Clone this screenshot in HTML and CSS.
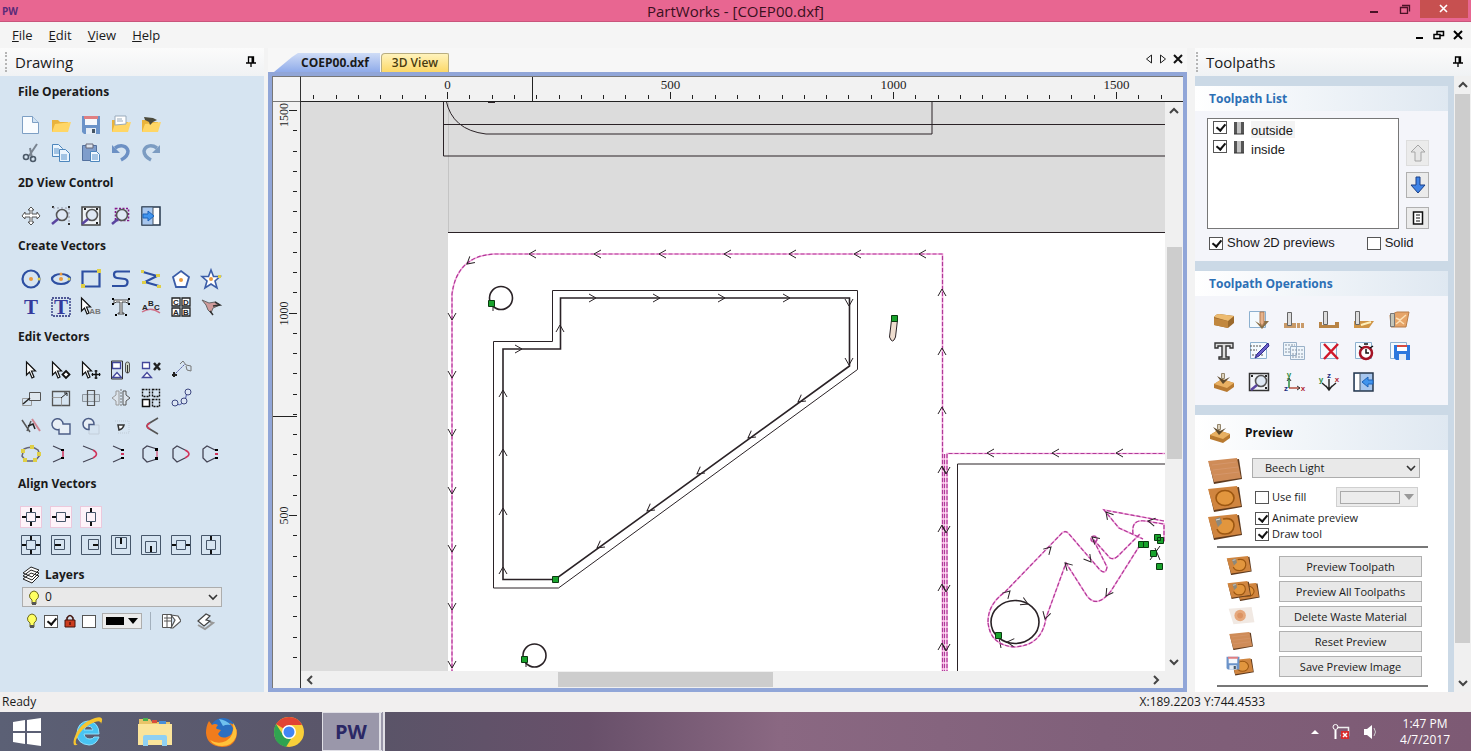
FILE: index.html
```html
<!DOCTYPE html>
<html lang="en">
<head>
  <meta charset="UTF-8" />
  <meta name="viewport" content="width=device-width, initial-scale=1.0"/>
  <title>PartWorks - [COEP00.dxf]</title>
  <link rel="stylesheet" href="styles.css">
</head>
<body>
  <!-- shared icon shapes -->
  <svg class="sprite" aria-hidden="true">
    <symbol id="folder" viewBox="0 0 20 20"><path d="M1 5h6l2 2h8v10H1z" fill="#e9b33c"/><path d="M4 9l16-2-3 10H1z" fill="#ffd666"/></symbol>
    <symbol id="page" viewBox="0 0 20 20"><path d="M1.500 1.500h16v16h-16z" fill="#f4fafe" stroke="#8cb0cf"/></symbol>
    <symbol id="cursor" viewBox="0 0 20 20"><path d="M2.500 2v13l3-3 2.500 6 2-1-2.500-6h4z" fill="#fff" stroke="#111" stroke-width="1.200"/></symbol>
    <symbol id="lens" viewBox="0 0 20 20"><circle cx="11" cy="9" r="5.500" fill="#dfe8f4" stroke="#555" stroke-width="1.600"/><path d="M7 13l-6 5" stroke="#5a45a0" stroke-width="2.500"/></symbol>
    <symbol id="floppy" viewBox="0 0 20 20"><path d="M1 1h18v18H3l-2-2z" fill="#6b93c9"/><path d="M4 1h12v9H4z" fill="#f5f8fc"/><path d="M3 1h14v3H3z" fill="#e07f82"/><path d="M5 13h10v6H5z" fill="#e4ecf5"/><path d="M11 14h3v4h-3z" fill="#456"/></symbol>
    <symbol id="plank" viewBox="0 0 22 18"><path d="M1 5q2-3 5-3l15 2v7l-6 5L1 13z" fill="#9c6a2c"/><path d="M1 5q2-3 5-3l15 2-6 5z" fill="#edbb70"/><path d="M1 6l14 3v7L1 13z" fill="#c1873e"/></symbol>
    <symbol id="board" viewBox="0 0 36 26"><path d="M2 5l30-4 3 20-28 5z" fill="#5e3a1e"/><path d="M1 3l29-3 4 20-27 4z" fill="#cf8c58"/><path d="M5 7l24-3M6 12l25-3M7 17l25-3" stroke="#d5966a"/></symbol>
    <symbol id="board-ring" viewBox="0 0 36 26"><path d="M2 5l30-4 3 20-28 5z" fill="#5e3a1e"/><path d="M1 3l29-3 4 20-27 4z" fill="#d0853f"/><ellipse cx="18" cy="12" rx="9" ry="7.500" fill="#e2963e" stroke="#9c5711" stroke-width="1.600"/></symbol>
    <symbol id="board-tool" viewBox="0 0 36 26"><path d="M2 5l30-4 3 20-28 5z" fill="#5e3a1e"/><path d="M1 3l29-3 4 20-27 4z" fill="#d0853f"/><path d="M16 5q11-2 11 7-1 8-9 8-6 0-8-5" fill="#e2963e" stroke="#9c5711" stroke-width="1.600"/><path d="M8 5l5-2 2 6-4 4z" fill="#8d897c"/><path d="M9 6l4-1" stroke="#ddd"/></symbol>
    <symbol id="carve" viewBox="0 0 22 20"><path d="M1 12l8-5 12 4v4l-7 5L1 16z" fill="#b87a31"/><path d="M1 12l8-5 12 4-7 5z" fill="#e8b062"/><path d="M4 4l6 8 7-7-6 3z" fill="#5f4a2c"/><path d="M8.500 1.500h3v5h-3z" fill="#ddd2bd" stroke="#94866c"/></symbol>
    <symbol id="bulb" viewBox="0 0 12 16"><path d="M4 10Q1 8 1.500 5 3 1 6 1t4.500 4Q11 8 8 10v4H4z" fill="#ffff62" stroke="#6e6b20"/><path d="M4 12h4v3H4z" fill="#555"/></symbol>
    <symbol id="pin" viewBox="0 0 10 12"><path d="M2.500 1h5v6h-5zM0 7h10M5 7v4" fill="none" stroke="#000" stroke-width="1.300"/><path d="M5.500 1h2v6h-2z"/></symbol>
    <symbol id="up" viewBox="0 0 10 8"><path d="M1 6l4-4 4 4" fill="none" stroke="#444" stroke-width="2"/></symbol>
  </svg>

  <div class="window">
    <header class="titlebar">
      <span class="app-mark">PW</span>
      <h1>PartWorks - [COEP00.dxf]</h1>
      <div class="window-buttons">
        <button aria-label="Minimize"><svg width="10" height="10"><path d="M1 8h8" stroke="#4a1226" stroke-width="2"/></svg></button>
        <button aria-label="Restore"><svg width="12" height="10"><path d="M1.500 3.500h7v6h-7zM3 1.500h7.500v6" fill="none" stroke="#4a1226" stroke-width="1.300"/></svg></button>
        <button class="close" aria-label="Close"><svg width="10" height="10"><path d="M1 1l7 7M8 1l-7 7" stroke="#fff" stroke-width="1.600"/></svg></button>
      </div>
    </header>

    <nav class="menubar">
      <button><u>F</u>ile</button>
      <button><u>E</u>dit</button>
      <button><u>V</u>iew</button>
      <button><u>H</u>elp</button>
      <div class="doc-buttons">
        <button aria-label="Minimize document"><svg width="10" height="10"><path d="M1 8h7" stroke="#000" stroke-width="2"/></svg></button>
        <button aria-label="Restore document"><svg width="12" height="10"><path d="M1 4.500h6v4H1zM4 4V1.500h6.500v4H7" fill="none" stroke="#000" stroke-width="1.500"/></svg></button>
        <button aria-label="Close document"><svg width="10" height="10"><path d="M1 1l8 8M9 1l-8 8" stroke="#000" stroke-width="2"/></svg></button>
      </div>
    </nav>

    <main class="workspace">
      <aside class="drawing">
        <div class="panel-title"><h2>Drawing</h2><button aria-label="Pin drawing panel"><svg width="10" height="12"><use href="#pin"/></svg></button></div>
        <div class="drawing-body">
          <h3>File Operations</h3>
          <div class="tools">
            <button aria-label="New"><svg viewBox="0 0 20 20"><path d="M1.500 1.500h10l6 6v11h-16z" fill="#f9fcff" stroke="#7d9fc4"/><path d="M11.500 1.500v6h6" fill="#cfe2f4" stroke="#7d9fc4"/></svg></button>
            <button aria-label="Open"><svg viewBox="0 0 20 20"><use href="#folder"/></svg></button>
            <button aria-label="Save"><svg viewBox="0 0 20 20"><use href="#floppy"/></svg></button>
            <button aria-label="Import vectors"><svg viewBox="0 0 20 20"><use href="#folder"/><path d="M4 1h11v8L4 10z" fill="#fff" stroke="#9ab"/><path d="M6 4h5M6 6h6" stroke="#9ab"/></svg></button>
            <button aria-label="Import bitmap"><svg viewBox="0 0 20 20"><use href="#folder"/><path d="M3 2l9 1 4 2-4 2-3 3-1-3-4-2z" fill="#4c4a3c"/></svg></button>
            <i></i><i></i>
            <button aria-label="Cut"><svg viewBox="0 0 20 20"><path d="M16 1L8 13M9 5l2 10" stroke="#7a8490" stroke-width="2"/><circle cx="5" cy="14" r="2.500" fill="none" stroke="#4b5968" stroke-width="1.600"/><circle cx="12" cy="16" r="2.500" fill="none" stroke="#4b5968" stroke-width="1.600"/></svg></button>
            <button aria-label="Copy"><svg viewBox="0 0 20 20"><path d="M1.500 1.500h6l4 4v8h-10z" fill="#eaf4fd" stroke="#4d86bd"/><path d="M8.500 6.500h6l4 4v8h-10z" fill="#eaf4fd" stroke="#4d86bd"/><path d="M3 6h5M3 8h5M3 10h5M10 12h6M10 14h6M10 16h6" stroke="#5b93cb"/></svg></button>
            <button aria-label="Paste"><svg viewBox="0 0 20 20"><path d="M1.500 2.500h14v15h-14z" fill="#7f9dcb" stroke="#54719e"/><path d="M5 1h7v4H5z" fill="#dde4ee" stroke="#667"/><path d="M9.500 8.500h6l3 3v7h-9z" fill="#f2f8fe" stroke="#4d86bd"/><path d="M11 12h6M11 14h6M11 16h6" stroke="#5b93cb"/></svg></button>
            <button aria-label="Undo"><svg viewBox="0 0 20 20"><path d="M4 5c6-4 12-2 13 3 0 4-3 7-7 9" fill="none" stroke="#6c90c4" stroke-width="3.500"/><path d="M1 2v8h8z" fill="#6c90c4"/></svg></button>
            <button aria-label="Redo"><svg viewBox="0 0 20 20"><path d="M16 5c-6-4-12-2-13 3 0 4 3 7 7 9" fill="none" stroke="#7c9cc2" stroke-width="3.500"/><path d="M19 2v8h-8z" fill="#7c9cc2"/></svg></button>
          </div>

          <h3>2D View Control</h3>
          <div class="tools">
            <button aria-label="Pan"><svg viewBox="0 0 20 20"><path d="M10 1l3 3h-2v4h5V6l3 4-3 3v-2h-5v5h2l-3 3-3-3h2v-5H4v2l-3-3 3-4v2h5V4H7z" fill="#fff" stroke="#555"/></svg></button>
            <button aria-label="Zoom"><svg viewBox="0 0 20 20"><use href="#lens"/><path d="M1 1h2M17 1h2M17 18h2" stroke="#333" stroke-width="2"/><path d="M2 2h16v16" fill="none" stroke="#99a" stroke-dasharray="2 2"/></svg></button>
            <button aria-label="Zoom extents"><svg viewBox="0 0 20 20"><path d="M1 1h18v18H1z" fill="#eef2f6" stroke="#444" stroke-width="1.500"/><path d="M3 3h2M15 3h2M15 17h2" stroke="#222" stroke-width="2"/><use href="#lens"/></svg></button>
            <button aria-label="Zoom selected"><svg viewBox="0 0 20 20"><path d="M4.500 2.500h13v12h-13z" fill="none" stroke="#86188c" stroke-width="1.600" stroke-dasharray="2 1.500"/><use href="#lens"/></svg></button>
            <button aria-label="Toggle side panels"><svg viewBox="0 0 20 20"><path d="M1 1h18v18H1z" fill="#fff" stroke="#27384d" stroke-width="1.500"/><path d="M1 1h11v18H1z" fill="#a7c6ee" stroke="#456"/><path d="M2 8h5V5l6 5-6 5v-3H2z" fill="#4094ee" stroke="#1c62b8"/></svg></button>
          </div>

          <h3>Create Vectors</h3>
          <div class="tools">
            <button aria-label="Circle"><svg viewBox="0 0 20 20"><circle cx="10" cy="10" r="8.500" class="blue"/><circle cx="10" cy="10" r="2" fill="#eb9a3c"/><circle cx="18" cy="10" r="1.500" fill="#e4d34b"/></svg></button>
            <button aria-label="Ellipse"><svg viewBox="0 0 20 20"><ellipse cx="10" cy="10" rx="9" ry="5" class="blue"/><circle cx="10" cy="10" r="2" fill="#eb9a3c"/><circle cx="10" cy="5" r="1.500" fill="#eb9a3c"/><circle cx="18" cy="10" r="1.500" fill="#e4d34b"/></svg></button>
            <button aria-label="Rectangle"><svg viewBox="0 0 20 20"><path d="M1.500 2.500h17v15h-17z" class="blue"/><path d="M0 15h4v4H0zM16 0h4v4h-4z" fill="#dfcf47"/></svg></button>
            <button aria-label="Polyline"><svg viewBox="0 0 20 20"><path d="M19 2.500H6c-4 0-4 6 0 6.500l8 1c4 1 3 7-1 7H1" class="blue"/></svg></button>
            <button aria-label="Curve"><svg viewBox="0 0 20 20"><path d="M2 3l14 4-12 6 14 4" class="blue"/><path d="M0 1h3v3H0zM15 5h4v3h-4zM1 12h4v3H1zM16 16h4v3h-4z" fill="#dfcf47"/></svg></button>
            <button aria-label="Polygon"><svg viewBox="0 0 20 20"><path d="M10 2l8 6-3 10H5L2 8z" fill="#fff" stroke="#3b5da8" stroke-width="1.800"/><circle cx="10" cy="11" r="2" fill="#eb9a3c"/></svg></button>
            <button aria-label="Star"><svg viewBox="0 0 20 20"><path d="M10 1l2.500 6.500H19l-5 4.500 2 7-6-4-6 4 2-7-5-4.500h6.500z" fill="#fff" stroke="#3b5da8" stroke-width="1.600"/><circle cx="10" cy="10" r="2" fill="#eb9a3c"/><path d="M17 6h3v3h-3z" fill="#dfcf47"/></svg></button>
            <button aria-label="Text"><svg viewBox="0 0 20 20"><text x="10" y="17" class="letter">T</text></svg></button>
            <button aria-label="Auto text layout"><svg viewBox="0 0 20 20"><path d="M1 1h18v18H1z" fill="none" stroke="#232a78" stroke-width="1.300" stroke-dasharray="2 1"/><text x="10" y="17" class="letter">T</text></svg></button>
            <button aria-label="Edit text"><svg viewBox="0 0 20 20"><use href="#cursor" x="-2" y="-1"/><text x="14" y="17" class="tiny grey">AB</text></svg></button>
            <button aria-label="Convert text to curves"><svg viewBox="0 0 20 20"><path d="M3 3h14v3h-1l-1-1h-4v11h2v1H7v-1h2V5H5L4 6H3z" fill="#fff" stroke="#444"/><path d="M1 1h2v2H1zM17 1h2v2h-2zM4 17h2v2H4zM14 17h2v2h-2zM1 6h2v2H1zM17 6h2v2h-2z"/></svg></button>
            <button aria-label="Text on curve"><svg viewBox="0 0 20 20"><path d="M1 15q9-6 18 1" fill="none" stroke="#cf6f86" stroke-width="1.500"/><text x="4" y="13" class="tiny">A</text><text x="10" y="9" class="tiny">B</text><text x="16" y="13" class="tiny">C</text></svg></button>
            <button aria-label="Nest parts"><svg viewBox="0 0 20 20"><path d="M1 1h8v8H1zM11 1h8v8h-8zM1 11h8v8H1zM11 11h8v8h-8z" fill="#fff" stroke="#222" stroke-width="1.300"/><text x="5" y="8" class="tiny">C</text><text x="15" y="8" class="tiny">D</text><text x="5" y="18" class="tiny">A</text><text x="15" y="18" class="tiny">B</text></svg></button>
            <button aria-label="Trace bitmap"><svg viewBox="0 0 20 20"><path d="M1 3l7 3 6-1 5 3-7 3-2 5-3-3-2-5z" fill="#cf9a9a" stroke="#666"/><path d="M9 14l3 4M14 5l5 3-7 1" stroke="#333" fill="none" stroke-width="1.500"/></svg></button>
          </div>

          <h3>Edit Vectors</h3>
          <div class="tools">
            <button aria-label="Select"><svg viewBox="0 0 20 20"><use href="#cursor" x="3"/></svg></button>
            <button aria-label="Node edit"><svg viewBox="0 0 20 20"><use href="#cursor" x="-1"/><path d="M15 11l3.500 3.500-3.500 3.500-3.500-3.500z" fill="#fff" stroke="#111" stroke-width="1.800"/></svg></button>
            <button aria-label="Transform"><svg viewBox="0 0 20 20"><use href="#cursor" x="-1"/><path d="M15 10v9M10.500 14.500h9" stroke="#111" stroke-width="1.500"/><path d="M13.500 11h3M13.500 18h3M11.500 13v3M18.500 13v3" stroke="#111"/></svg></button>
            <button aria-label="Group"><svg viewBox="0 0 20 20"><path d="M1.500 2.500h8v6h-8zM1.500 17.500l4.500-5 4.500 5z" fill="#fff" stroke="#43479b" stroke-width="1.300"/><path d="M.5 1v18h11V1z" fill="none" stroke="#333"/><rect x="14.500" y="2" width="4" height="11" rx="2" fill="#cdd6c6" stroke="#555"/><path d="M16.500 5v8" stroke="#333"/></svg></button>
            <button aria-label="Ungroup"><svg viewBox="0 0 20 20"><path d="M1.500 2.500h7v6h-7zM1.500 17.500l4.500-5 4.500 5z" fill="#fff" stroke="#43479b" stroke-width="1.300"/><path d="M13 3l6 7M19 3l-6 7" stroke="#222" stroke-width="2.500"/></svg></button>
            <button aria-label="Measure"><svg viewBox="0 0 20 20"><path d="M3 15L14 4" stroke="#4a4f9c" stroke-dasharray="2 1"/><path d="M9 4l3-3 3 4 5 1v5l-4-1-1-4" fill="none" stroke="#777"/><path d="M1 15h5M3 12v5" stroke="#222" stroke-width="2"/></svg></button>
            <i></i>
            <button aria-label="Move"><svg viewBox="0 0 20 20"><path d="M1.500 10.500h9v7h-9z" fill="none" stroke="#999"/><path d="M8.500 4.500h11v8h-11z" fill="#dfe7ee" stroke="#555"/><path d="M2 16l7-6" stroke="#222" stroke-width="1.500"/></svg></button>
            <button aria-label="Set size"><svg viewBox="0 0 20 20"><path d="M1.500 3.500h17v14h-17z" fill="none" stroke="#555" stroke-width="1.300"/><path d="M1.500 9.500h9v8" fill="none" stroke="#999"/><path d="M10 10l6-5M16 5h-3M16 5v3" stroke="#222"/></svg></button>
            <button aria-label="Rotate"><svg viewBox="0 0 20 20"><path d="M1.500 6.500h17v7h-17z" fill="#cfdbe5" stroke="#8c959e"/><path d="M6.500 2.500h7v15h-7z" fill="none" stroke="#555" stroke-width="1.200"/></svg></button>
            <button aria-label="Mirror"><svg viewBox="0 0 20 20"><path d="M8 3H5v4L1 10l4 3v4h3z" fill="#dde5ed" stroke="#999"/><path d="M12 3h3v4l4 3-4 3v4h-3z" fill="#dde5ed" stroke="#555"/><path d="M10 1v18" stroke="#777" stroke-dasharray="2 1"/></svg></button>
            <button aria-label="Array copy"><svg viewBox="0 0 20 20"><path d="M1.500 1.500h7v7h-7zM11.500 1.500h7v7h-7zM11.500 11.500h7v7h-7z" fill="none" stroke="#111" stroke-width="1.400" stroke-dasharray="2 1"/><path d="M1.500 11.500h7v7h-7z" fill="#fff" stroke="#111" stroke-width="1.500"/></svg></button>
            <button aria-label="Copy along"><svg viewBox="0 0 20 20"><path d="M4 16q10 4 12-12" fill="none" stroke="#4a57a8"/><circle cx="4" cy="15" r="3" class="dot"/><circle cx="13" cy="13" r="3" class="dot"/><circle cx="17" cy="4" r="3" class="dot"/></svg></button>
            <i></i>
            <button aria-label="Trim"><svg viewBox="0 0 20 20"><path d="M1 4l8 12M6 15l4-10" stroke="#555" stroke-width="1.500"/><path d="M11 3l8 12" stroke="#d08592" stroke-width="2"/><path d="M7 10l5-2 2 5" stroke="#222" fill="none" stroke-width="1.500"/></svg></button>
            <button aria-label="Weld"><svg viewBox="0 0 20 20"><path d="M8 13.500A5.500 5.500 0 1 1 12 8h7v10H8z" fill="#e8eff6" stroke="#4c5d86" stroke-width="1.400"/></svg></button>
            <button aria-label="Subtract"><svg viewBox="0 0 20 20"><path d="M8 13v5h10V9h-5" fill="none" stroke="#c3ceda"/><path d="M13 8.500H8v5A5.500 5.500 0 1 1 13 8.500z" fill="#e8eff6" stroke="#4c5d86" stroke-width="1.500"/></svg></button>
            <button aria-label="Intersect"><svg viewBox="0 0 20 20"><path d="M7 9h6q-1 4-5 5z" fill="#fff" stroke="#333" stroke-width="1.500"/><path d="M4 5h14v12H6" fill="none" stroke="#c1ccd7" stroke-dasharray="1 1"/></svg></button>
            <button aria-label="Fillet"><svg viewBox="0 0 20 20"><path d="M17 2L7 8q-2 2 0 4l10 6" fill="none" stroke="#555" stroke-width="1.600"/><path d="M9 7q-6 3 0 6" fill="none" stroke="#d13a5a" stroke-width="1.500"/></svg></button>
            <i></i><i></i>
            <button aria-label="Join vectors"><svg viewBox="0 0 20 20"><path d="M3 5q8-4 14 1l2 5-5 6H5l-4-5z" fill="none" stroke="#667" stroke-width="1.500"/><path d="M0 5h4v4H0zM9 1h4v4H9zM16 8h4v4h-4zM2 14h4v4H2zM12 14h4v4h-4z" fill="#dfcf47"/></svg></button>
            <button aria-label="Close with line"><svg viewBox="0 0 20 20"><path d="M2 2l9 4M2 18l9-4" stroke="#445" stroke-width="1.300"/><path d="M12 6v8" stroke="#d0335a" stroke-width="1.500"/><path d="M10 5h3v2h-3zM10 13h3v2h-3z"/></svg></button>
            <button aria-label="Close with curve"><svg viewBox="0 0 20 20"><path d="M2 2l10 4M2 18l10-4" stroke="#445" stroke-width="1.300"/><path d="M12 6q7 4 0 8" fill="none" stroke="#d0335a" stroke-width="1.500"/></svg></button>
            <button aria-label="Close by moving"><svg viewBox="0 0 20 20"><path d="M2 2l9 4M2 18l9-4" stroke="#445" stroke-width="1.300"/><path d="M10 5h3v2h-3zM10 13h3v2h-3z"/><path d="M10 9h3v2h-3z" fill="#d0335a"/></svg></button>
            <button aria-label="Join with line"><svg viewBox="0 0 20 20"><path d="M16 5L6 2 2 5v9l4 4 10-3" fill="none" stroke="#445" stroke-width="1.300"/><path d="M16 5v10" stroke="#d0335a"/><path d="M14 4h3v3h-3zM14 13h3v3h-3z"/></svg></button>
            <button aria-label="Join with curve"><svg viewBox="0 0 20 20"><path d="M14 6L6 2 2 5v9l4 4 8-4" fill="none" stroke="#445" stroke-width="1.300"/><path d="M14 6q8 4 0 8" fill="none" stroke="#d0335a" stroke-width="1.500"/></svg></button>
            <button aria-label="Join by moving"><svg viewBox="0 0 20 20"><path d="M14 6L6 2 2 5v9l4 4 8-4" fill="none" stroke="#445" stroke-width="1.300"/><path d="M14 5h3v2h-3zM14 13h3v2h-3z"/><path d="M14 9h3v2h-3z" fill="#d0335a"/></svg></button>
          </div>

          <h3>Align Vectors</h3>
          <div class="tools">
            <button aria-label="Center in job"><svg viewBox="0 0 20 20" class="plate"><path d="M5.500 5.500h9v9h-9z" class="thin"/><path d="M1 10h4M15 10h4M10 1v4M10 15v4" class="tick"/></svg></button>
            <button aria-label="Center across job"><svg viewBox="0 0 20 20" class="plate"><path d="M5.500 5.500h9v9h-9z" class="thin"/><path d="M1 10h4M15 10h4" class="tick"/></svg></button>
            <button aria-label="Center along job"><svg viewBox="0 0 20 20" class="plate"><path d="M5.500 5.500h9v9h-9z" class="thin"/><path d="M10 1v4M10 15v4" class="tick"/></svg></button>
            <i></i><i></i><i></i><i></i>
            <button aria-label="Align centers"><svg viewBox="0 0 20 20"><path d="M.5.5h19v19H.5zM5.500 5.500h9v9h-9z" class="thin"/><path d="M1 10h4M15 10h4M10 1v4M10 15v4" class="tick"/></svg></button>
            <button aria-label="Align left"><svg viewBox="0 0 20 20"><path d="M.5.5h19v19H.5zM3.500 4.500h10v10h-10z" class="thin"/><path d="M4 10h6" class="tick"/></svg></button>
            <button aria-label="Align right"><svg viewBox="0 0 20 20"><path d="M.5.5h19v19H.5zM7.500 4.500h10v10h-10z" class="thin"/><path d="M12 10h5" class="tick"/></svg></button>
            <button aria-label="Align top"><svg viewBox="0 0 20 20"><path d="M.5.5h19v19H.5zM4.500 2.500h11v11h-11z" class="thin"/><path d="M10 3v6" class="tick"/></svg></button>
            <button aria-label="Align bottom"><svg viewBox="0 0 20 20"><path d="M.5.5h19v19H.5zM4.500 6.500h11v11h-11z" class="thin"/><path d="M10 11v6" class="tick"/></svg></button>
            <button aria-label="Align horizontal centers"><svg viewBox="0 0 20 20"><path d="M.5.5h19v19H.5zM5.500 5.500h9v9h-9z" class="thin"/><path d="M1 10h4M15 10h4" class="tick"/></svg></button>
            <button aria-label="Align vertical centers"><svg viewBox="0 0 20 20"><path d="M.5.5h19v19H.5zM5.500 5.500h9v9h-9z" class="thin"/><path d="M10 1v4M10 15v4" class="tick"/></svg></button>
          </div>

          <h3 class="layers-title"><svg width="18" height="18" viewBox="0 0 18 18"><path d="M1 13l8-6 8 3-7 7zM1 10l8-6 8 3-7 7zM1 7l8-6 8 3-7 7z" fill="#fff" stroke="#222"/></svg>Layers</h3>
          <div class="layer-select">
            <svg width="12" height="16"><use href="#bulb"/></svg>
            <select aria-label="Layer"><option>0</option></select>
            <svg class="chevron" width="10" height="8" viewBox="0 0 10 8"><path d="M1 2l4 4 4-4" fill="none" stroke="#333" stroke-width="1.600"/></svg>
          </div>
          <div class="layer-row">
            <svg width="12" height="16"><use href="#bulb"/></svg>
            <input type="checkbox" aria-label="Visible" checked>
            <svg width="12" height="14" viewBox="0 0 12 14"><path d="M3 6V4q3-5 6 0v2" fill="none" stroke="#44150f" stroke-width="1.600"/><path d="M1 6h10v7H1z" fill="#cc3d1f" stroke="#44150f"/><path d="M6 8v3" stroke="#200"/></svg>
            <input type="checkbox" aria-label="Locked">
            <button class="swatch" aria-label="Layer colour"><span></span><svg width="10" height="6"><path d="M0 0h10L5 6z"/></svg></button>
            <span class="divider"></span>
            <button aria-label="Move to layer"><svg viewBox="0 0 20 20"><path d="M1.500 3.500h9v13h-9zM3 7h7M3 10h7M6 4v12" fill="#fff" stroke="#555"/><path d="M10 4l7 1 3 5-8 7h-2l4-8z" fill="#fff" stroke="#555" stroke-width="1.200"/></svg></button>
            <button aria-label="Layer manager"><svg viewBox="0 0 20 20"><path d="M3 14l7 4 8-6-3-1" fill="none" stroke="#999" stroke-width="2"/><path d="M3 10l8-7 4 2-4 4 4 1-6 5z" fill="#fff" stroke="#444" stroke-width="1.200"/></svg></button>
          </div>
        </div>
      </aside>

      <section class="document">
        <div class="tabs">
          <button class="tab active">COEP00.dxf</button>
          <button class="tab view3d">3D View</button>
          <div class="tab-nav">
            <button aria-label="Previous tab"><svg width="8" height="10"><path d="M6.500 1v8L1.500 5z" fill="none" stroke="#222"/></svg></button>
            <button aria-label="Next tab"><svg width="8" height="10"><path d="M1.500 1v8l5-4z" fill="none" stroke="#222"/></svg></button>
            <button aria-label="Close tab"><svg width="10" height="10"><path d="M1 1l8 8M9 1l-8 8" stroke="#111" stroke-width="2"/></svg></button>
          </div>
        </div>
        <div class="viewport">
          <div class="corner"></div>
          <svg class="ruler-x" id="rulerX"></svg>
          <svg class="ruler-y" id="rulerY"></svg>
          <div class="canvas">
            <svg>
              <g transform="translate(-301 -102)">
                <path d="M448 232h2000v1000H448z" fill="#fff"/>
                <path d="M448.500 100v133" stroke="#c4c4c4"/>
                <g class="ink">
                  <path d="M448 232.500h2000M443.500 100v56h2000M443 124.500h2000M446 100q6 30 40 34h446v-34M957.500 800v-336h1500"/>
                  <path d="M488 102h7" stroke-width="2"/>
                  <path d="M552.500 290.500h305v79L558.500 588h-65V341.500h59z"/>
                  <path d="M560.500 298h289v68L555 579.500h-52V349h57.500z" class="heavy"/>
                  <circle cx="501" cy="298" r="11.500" class="heavy"/>
                  <circle cx="534.500" cy="655.500" r="11.500" class="heavy"/>
                  <ellipse cx="1015" cy="622" rx="24" ry="21.500" class="heavy"/>
                  <path d="M493 305v6M526 661v6M999 638l2 10M1155 548l5 12M1150 560l10-14"/>
                  <path d="M891.500 320l-2 17q3 8 6 0l2-17z" fill="#eeddcf"/>
                </g>
                <!-- toolpath previews: pale track with the dashed cut on top -->
                <g id="cuts">
                  <path d="M942.500 800V254H494q-37 2-42 40v506"/>
                  <path d="M947 800V453.500h1500M944.500 454v400"/>
                  <path d="M988 622q0-18 17-30l57-59q4-3 7 1l31 36q6 5 7-3l-14-28 17 19q4 2 8-2l22-22"/>
                  <path d="M1140 545l-29 46q-14 18-24 5l-21-33-20 55q-4 28-32 29-24-2-26-25"/>
                  <path d="M1164 521l-60-11 15 18 24 11M1133 534q-2-15 12-13l19 3v18"/>
                  <circle cx="1094" cy="539" r="3"/>
                </g>
                <use href="#cuts" class="track-line"/>
                <use href="#cuts" class="cut"/>
                <g class="ink" id="arrows"></g>
                <g class="node">
                  <path d="M488.500 300.500h6v6h-6zM521.500 656.500h6v6h-6zM552.500 576.500h6v6h-6zM891.500 315.500h6v6h-6zM995.500 632.500h6v6h-6z"/>
                  <path d="M1138.500 541.500h5v6h-5zM1143.500 541.500h5v6h-5zM1154.500 534.500h6v6h-6zM1157.500 537.500h6v6h-6zM1150.500 550.500h6v6h-6zM1156.500 563.500h6v6h-6z"/>
                </g>
              </g>
            </svg>
          </div>
          <div class="scroll-y">
            <svg width="10" height="8"><use href="#up"/></svg>
            <div class="track"><div class="thumb"></div></div>
            <svg class="down" width="10" height="8"><use href="#up"/></svg>
          </div>
          <div class="scroll-x">
            <svg class="left" width="10" height="8"><use href="#up"/></svg>
            <div class="track"><div class="thumb"></div></div>
            <svg class="right" width="10" height="8"><use href="#up"/></svg>
          </div>
        </div>
      </section>

      <aside class="toolpaths">
        <div class="panel-title"><h2>Toolpaths</h2><button aria-label="Pin toolpaths panel"><svg width="10" height="12"><use href="#pin"/></svg></button></div>
        <div class="toolpaths-body">
          <div class="cards">
            <section class="card">
              <h3>Toolpath List</h3>
              <div class="list-row">
                <div class="list">
                  <label class="current"><input type="checkbox" checked><svg width="12" height="16" viewBox="0 0 12 16"><path d="M1 1h3v12H1zM8 1h3v12H8z" fill="#555"/><path d="M4 1h4v12H4z" fill="#c4c4c4"/><path d="M1 13h10" stroke="#333"/></svg><span>outside</span></label>
                  <label><input type="checkbox" checked><svg width="12" height="16" viewBox="0 0 12 16"><path d="M1 1h3v12H1zM8 1h3v12H8z" fill="#555"/><path d="M4 1h4v12H4z" fill="#c4c4c4"/><path d="M1 13h10" stroke="#333"/></svg><span>inside</span></label>
                </div>
                <div class="list-buttons">
                  <button disabled aria-label="Move up"><svg width="18" height="20"><path d="M9 2l7 7h-4v9H6V9H2z" fill="#e6e6e6" stroke="#a5a5a5"/></svg></button>
                  <button aria-label="Move down"><svg width="18" height="20"><path d="M9 18l7-8h-5V2H7v8H2z" fill="#3f83e6" stroke="#1b3f86"/></svg></button>
                  <button class="note" aria-label="Properties"><svg width="12" height="14"><path d="M1.500 1h9v12h-9z" fill="#fff" stroke="#111" stroke-width="1.500"/><path d="M4 4h4M4 7h4M4 10h4" stroke="#111"/></svg></button>
                </div>
              </div>
              <div class="preview-row">
                <label><input type="checkbox" checked>Show 2D previews</label>
                <label><input type="checkbox">Solid</label>
              </div>
            </section>

            <section class="card">
              <h3>Toolpath Operations</h3>
              <div class="operations">
                <button aria-label="Material setup"><svg viewBox="0 0 22 20"><use href="#plank" y="1"/></svg></button>
                <button aria-label="Toolpath settings"><svg viewBox="0 0 22 20"><use href="#page" x="-1"/><path d="M12 2h4v9h5l-7 8-7-8 5 3z" fill="#8a7048"/><path d="M12 2h4v11l-2 3-2-3z" fill="#e8b28a" stroke="#b07d55"/></svg></button>
                <button aria-label="Profile toolpath"><svg viewBox="0 0 22 20"><path d="M1 13h12v5H1zM14 13h3v5h-3zM18 13h3v5h-3z" fill="#c99a68"/><path d="M4.500 2.500h4v13h-4z" fill="#ddd" stroke="#666"/></svg></button>
                <button aria-label="Pocket toolpath"><svg viewBox="0 0 22 20"><path d="M1 12h3v3h13v-3h4v6H1z" fill="#b88445"/><path d="M5.500 1.500h4v13h-4z" fill="#ddd" stroke="#666"/></svg></button>
                <button aria-label="Drilling toolpath"><svg viewBox="0 0 22 20"><path d="M1 11h20l-5 7H1z" fill="#cf9445"/><path d="M8 15l10-3" stroke="#fff0ba" stroke-width="2"/><path d="M2.500 1.500h4v13h-4z" fill="#ddd" stroke="#666"/></svg></button>
                <button aria-label="VCarve toolpath"><svg viewBox="0 0 22 20"><path d="M2 5l7-3h12l-3 15H3z" fill="#e6a468" stroke="#b77d49"/><path d="M8 8l4 2 6-5M8 14l4-3 4 3" stroke="#fce0b5" stroke-width="1.500" fill="none"/><path d="M2.500 3.500h4v13h-4z" fill="#c5c5b8" stroke="#777"/></svg></button>
                <button aria-label="Quick engrave"><svg viewBox="0 0 22 20"><path d="M2 2h18v5h-3V5h-4v11h3v2H6v-2h3V5H5v2H2z" fill="#ddd" stroke="#333" stroke-width="1.400"/></svg></button>
                <button aria-label="Edit toolpath"><svg viewBox="0 0 22 20"><use href="#page"/><path d="M2 5h11M2 9h7M4 14h12" stroke="#555" stroke-dasharray="2 1"/><path d="M20 2L9 13l-2 4 4-2L21 5z" fill="#6a5fc8" stroke="#302a8c"/></svg></button>
                <button aria-label="Duplicate toolpath"><svg viewBox="0 0 22 20"><path d="M.5 1.500h13v13H.5zM7.500 5.500h14v13h-14z" fill="#eef5fb" stroke="#9ab1c8"/><path d="M2 4h10M2 8h5M9 9h11M9 13h11M2 11h5M9 16h11" stroke="#8795a6" stroke-dasharray="2 1"/></svg></button>
                <button aria-label="Delete toolpath"><svg viewBox="0 0 22 20"><use href="#page"/><path d="M6 3l14 15M20 3L6 18" stroke="#d1182a" stroke-width="2.500"/></svg></button>
                <button aria-label="Estimate time"><svg viewBox="0 0 22 20"><use href="#page"/><circle cx="13" cy="12" r="6" fill="#fff" stroke="#a41326" stroke-width="2.500"/><path d="M13 8v4h3M11 3h4M6 5l3 2M20 5l-3 2" stroke="#111" stroke-width="1.500" fill="none"/></svg></button>
                <button aria-label="Save toolpath"><svg viewBox="0 0 22 20"><use href="#page"/><path d="M6 4h16v15H8l-2-2z" fill="#2d78dd"/><path d="M9 4h10v6H9z" fill="#fff"/><path d="M9 4h10v2H9z" fill="#d84b3f"/><path d="M11 13h7v6h-7z" fill="#e4ecf5"/></svg></button>
                <button aria-label="Preview toolpath"><svg viewBox="0 0 22 20"><use href="#carve"/></svg></button>
                <button aria-label="Fit view"><svg viewBox="0 0 22 20"><path d="M1.500 1.500h19v17h-19z" fill="#f2f4f8" stroke="#333" stroke-width="1.500"/><path d="M3 4h2M17 4h2M17 16h2" stroke="#222" stroke-width="2"/><use href="#lens" x="1"/></svg></button>
                <button aria-label="View down Z"><svg viewBox="0 0 22 20"><path d="M6 7v9" stroke="#2b8a3e" stroke-width="1.500"/><path d="M6 16h11" stroke="#a32" stroke-width="1.300"/><path d="M4 9l2-3 2 3M14 14l3 2-3 2" fill="none" stroke="#333"/><text x="6" y="5" class="tiny green">y</text><text x="3" y="19" class="tiny navy">z</text><text x="20" y="19" class="tiny red">x</text></svg></button>
                <button aria-label="Isometric view"><svg viewBox="0 0 22 20"><path d="M11 7v10M11 17l-7-6M11 17l7-6M8 14l3 4 3-4" fill="none" stroke="#222" stroke-width="1.400"/><text x="11" y="6" class="tiny navy">z</text><text x="3" y="10" class="tiny green">y</text><text x="19" y="10" class="tiny red">x</text></svg></button>
                <button aria-label="Toggle panel"><svg viewBox="0 0 22 20"><path d="M1 1h19v18H1z" fill="#a7c6ee" stroke="#27384d" stroke-width="1.500"/><path d="M2 2h5v16H2z" fill="#fff"/><path d="M7 1v18" stroke="#456"/><path d="M20 8h-5V5l-6 5 6 5v-3h5z" fill="#4094ee" stroke="#1c62b8"/></svg></button>
              </div>
            </section>

            <section class="card preview">
              <h3><svg width="22" height="20"><use href="#carve"/></svg>Preview</h3>
              <div class="material">
                <div class="boards">
                  <svg width="36" height="26"><use href="#board"/></svg>
                  <svg width="36" height="26"><use href="#board-ring"/></svg>
                  <svg width="36" height="26"><use href="#board-tool"/></svg>
                </div>
                <div class="options">
                  <div class="select-wrap">
                    <select aria-label="Material"><option>Beech Light</option></select>
                    <svg class="chevron" width="10" height="8" viewBox="0 0 10 8"><path d="M1 2l4 4 4-4" fill="none" stroke="#333" stroke-width="1.600"/></svg>
                  </div>
                  <div class="fill-row">
                    <label><input type="checkbox">Use fill</label>
                    <button class="fill" disabled aria-label="Fill colour"><span></span><svg width="10" height="6"><path d="M0 0h10L5 6z" fill="#999"/></svg></button>
                  </div>
                  <label><input type="checkbox" checked>Animate preview</label>
                  <label><input type="checkbox" checked>Draw tool</label>
                </div>
              </div>
              <hr>
              <div class="actions">
                <svg viewBox="0 0 36 22"><use href="#board-tool" x="0" y="0" width="28" height="20"/></svg><button>Preview Toolpath</button>
                <svg viewBox="0 0 36 22"><use href="#board-ring" x="9" y="2" width="28" height="19"/><use href="#board-tool" x="1" y="0" width="26" height="19"/></svg><button>Preview All Toolpaths</button>
                <svg viewBox="0 0 36 22"><path d="M3 3l24-2 3 16-22 2z" fill="#f1e9e3"/><circle cx="15" cy="10" r="6" fill="#e6a87c"/><circle cx="15" cy="10" r="3" fill="#dc9362"/></svg><button>Delete Waste Material</button>
                <svg viewBox="0 0 36 22"><use href="#board" x="2" y="1" width="28" height="19"/></svg><button>Reset Preview</button>
                <svg viewBox="0 0 36 22"><use href="#board-ring" x="5" y="2" width="25" height="19"/><use href="#floppy" x="0" y="0" width="15" height="15"/></svg><button>Save Preview Image</button>
              </div>
              <hr>
            </section>
          </div>
          <div class="side-scroll">
            <svg width="10" height="8"><use href="#up"/></svg>
            <div class="track"><div class="thumb"></div></div>
            <svg class="down" width="10" height="8"><use href="#up"/></svg>
          </div>
        </div>
      </aside>
    </main>

    <footer class="status"><span>Ready</span><span class="coords">X:189.2203 Y:744.4533</span></footer>

    <div class="taskbar">
      <button aria-label="Start"><svg width="30" height="28" viewBox="0 0 30 28"><path d="M1 4l12-2v11H1zM15 2l14-2v13H15zM1 15h12v11L1 24zM15 15h14v13l-14-2z" fill="#fff"/></svg></button>
      <button aria-label="Internet Explorer"><svg width="34" height="32" viewBox="0 0 34 32"><path d="M28 18H13q1 5 6 5 3 0 4-2h5q-3 8-10 8Q6 28 6 17 7 6 17 5q11 1 11 13zM13 14h9q-1-4-5-4-3 0-4 4z" fill="#48c3f2" stroke="#8fe0fc" fill-rule="evenodd"/><path d="M7 28Q1 32 3 23 8 7 24 2q10-3 6 6 0-4-6-2Q10 11 5 24q-1 5 2 4z" fill="#f7c52e"/></svg></button>
      <button aria-label="File Explorer"><svg width="36" height="30" viewBox="0 0 36 30"><path d="M2 2h11l2 3h18v23H2z" fill="#e9c468"/><path d="M6 1h5v3H6z" fill="#4caf50"/><path d="M15 3h5v3h-5z" fill="#d94d3b"/><path d="M22 4h7v3h-7z" fill="#4a90d9"/><path d="M1 7h34v21H1z" fill="#fbe49b"/><path d="M6 29V20q0-2 2-2h20q2 0 2 2v9h-5v-6H11v6z" fill="#8fd0f3"/></svg></button>
      <button aria-label="Firefox"><svg width="34" height="32" viewBox="0 0 34 32"><circle cx="18" cy="15" r="13" fill="#2a6fc0"/><path d="M14 3q7 1 12 6-5-1-8 1z" fill="#6fc1ee"/><path d="M4 5l3 4q3-2 6 0-3 3-1 4l4 1-3 4q3 5 9 3 6-2 6-9-2-4-4-5 8 1 8 11-2 13-15 13Q2 30 1 17q0-7 3-12z" fill="#f07c1c"/><path d="M28 7q5 6 3 14-4 9-14 9-8 0-12-6 8 5 16 1 9-5 7-18z" fill="#ffc23a"/></svg></button>
      <button aria-label="Chrome"><svg width="32" height="32" viewBox="0 0 32 32"><circle cx="16" cy="16" r="15" fill="#f9cf3a"/><path d="M16 16L3 8Q8 1 16 1q9 0 13 8H16z" fill="#e14434"/><path d="M3 8l9 14 6 1-5 8Q1 28 1 16q0-5 2-8z" fill="#30a351"/><circle cx="16" cy="16" r="7" fill="#fff"/><circle cx="16" cy="16" r="5.500" fill="#4285f4"/></svg></button>
      <button class="running">PW</button>
      <div class="tray">
        <svg width="10" height="6"><path d="M1 5h8L5 1z" fill="#fff"/></svg>
        <svg width="18" height="18" viewBox="0 0 18 18"><path d="M5.500 4.500h11v8h-8" fill="none" stroke="#eee" stroke-width="1.500"/><circle cx="3.500" cy="4" r="2.500" fill="none" stroke="#fff"/><path d="M3.500 7v9" stroke="#fff" stroke-width="2"/><path d="M9 8h8v8H9z" fill="#d92c2c"/><path d="M11 10l4 4M15 10l-4 4" stroke="#fff" stroke-width="1.500"/></svg>
        <svg width="16" height="16" viewBox="0 0 16 16"><path d="M2 5h3l5-4v14l-5-4H2z" fill="#fff"/><path d="M12 4q3 4 0 8" fill="none" stroke="#ccc"/></svg>
        <div class="clock"><div>1:47 PM</div><div>4/7/2017</div></div>
      </div>
    </div>
  </div>

  <script>
    const svgNS = "http://www.w3.org/2000/svg";

    function add(parent, tag, attrs, text) {
      const el = document.createElementNS(svgNS, tag);
      for (const name in attrs) el.setAttribute(name, attrs[name]);
      if (text) el.textContent = text;
      parent.appendChild(el);
    }

    // rulers: one tick every 50 units, a label every 500
    function drawRulers() {
      const rulerX = document.getElementById("rulerX");
      const rulerY = document.getElementById("rulerY");

      for (let u = -300; u <= 1600; u += 50) {
        const x = Math.round(146 + u * 0.446) + 0.5;
        const major = u % 500 === 0;
        add(rulerX, "path", { d: `M${x} ${major ? 15 : 18}V22` });
        if (major) add(rulerX, "text", { x: x, y: 12 }, String(u));
      }
      add(rulerX, "path", { d: "M231.5 0V24" });

      for (let u = 1500; u >= 150; u -= 50) {
        const y = Math.round(8 + (1500 - u) * 0.405) + 0.5;
        const major = u % 500 === 0;
        add(rulerY, "path", { d: `M${major ? 16 : 20} ${y}H24` });
        // the top label is kept inside the ruler
        if (major) add(rulerY, "text", { transform: `translate(15 ${Math.max(y, 13)}) rotate(-90)` }, String(u));
      }
      add(rulerY, "path", { d: "M0 314.5H24" });
    }

    // [x, y, heading in degrees]
    const arrows = [
      [596, 298, 0], [660, 298, 0], [725, 298, 0], [790, 298, 0], [522, 349, 0],
      [560, 325, -90], [849, 306, 90], [849, 365, 90],
      [798, 402, 144], [748, 438, 144], [697, 474, 144], [647, 511, 144], [597, 548, 144],
      [467, 264, 140], [987, 453, 180], [1052, 453, 180], [1116, 453, 180],
      [1051, 547, -45], [1010, 591, -45], [1091, 562, 52], [1065, 563, -135],
      [1106, 596, 125], [1045, 619, 105], [1106, 512, -130], [1028, 604, 25],
      [1007, 642, 185], [1092, 537, -140], [1148, 521, 190]
    ];
    for (let x = 529; x < 940; x += 65) arrows.push([x, 254, 180]);
    for (let y = 320; y < 680; y += 58) arrows.push([452, y, 90]);
    for (let y = 390; y < 580; y += 59) arrows.push([503, y, -90]);
    for (let y = 289; y < 660; y += 59) arrows.push([942, y, -90]);
    for (let y = 474; y < 660; y += 59) arrows.push([946, y, 90]);

    const arrowLayer = document.getElementById("arrows");
    arrows.forEach(([x, y, angle]) => {
      add(arrowLayer, "path", { d: "M-7 -4L0 0L-7 4", transform: `translate(${x} ${y}) rotate(${angle})` });
    });

    drawRulers();
  </script>
</body>
</html>
```
FILE: styles.css
```css
* {
  box-sizing: border-box;
}

body {
  margin: 0;
  font-family: "Open Sans", "Noto Sans", sans-serif;
  font-size: 12px;
  line-height: 16px;
  color: #1a1a1a;
  background: #f0f0f0;
}

h1, h2, h3 {
  margin: 0;
}

button {
  padding: 0;
  border: none;
  background: none;
  font: inherit;
  color: inherit;
}

svg {
  display: block;
  flex: none;
}

.sprite {
  position: absolute;
  width: 0;
  height: 0;
}

.window {
  display: flex;
  flex-direction: column;
  height: 100vh;
}

.titlebar {
  display: flex;
  align-items: center;
  height: 22px;
  flex: none;
  background: #e86691;
  border-bottom: 1px solid #c9557c;
}

.titlebar h1 {
  flex: 1;
  text-align: center;
  font-size: 15px;
  font-weight: normal;
  color: #3a1020;
}

.app-mark {
  width: 112px;
  padding-left: 2px;
  font-size: 10px;
  font-weight: bold;
  color: #5a2a78;
}

.window-buttons {
  display: flex;
  width: 112px;
  height: 18px;
  align-self: flex-start;
}

.window-buttons button {
  display: flex;
  flex: 1;
  align-items: center;
  justify-content: center;
}

.window-buttons .close {
  flex: none;
  width: 48px;
  margin-right: 3px;
  background: #c75050;
}

.menubar {
  display: flex;
  align-items: center;
  gap: 16px;
  height: 26px;
  flex: none;
  padding: 0 8px 0 12px;
  background: #f5f5f5;
  font-size: 13px;
}

.doc-buttons {
  display: flex;
  gap: 8px;
  margin-left: auto;
}

.workspace {
  display: flex;
  flex: 1;
  min-height: 0;
}

.panel-title {
  display: flex;
  align-items: center;
  justify-content: space-between;
  height: 28px;
  flex: none;
  padding: 0 8px;
  background: linear-gradient(#fbfbfb, #f0f2f4);
}

.panel-title::before {
  content: "";
  height: 20px;
  margin-left: -3px;
  margin-right: 8px;
  border-left: 2px dotted #b5b5b5;
}

.panel-title h2 {
  flex: 1;
  font-size: 15px;
  font-weight: normal;
}

/* left panel */
.drawing {
  width: 264px;
  flex: none;
  display: flex;
  flex-direction: column;
}

.drawing-body {
  flex: 1;
  min-height: 0;
  padding: 8px 16px;
  background: #d6e4f1;
}

.drawing h3 {
  padding-left: 2px;
  font-size: 12px;
}

.tools {
  display: grid;
  grid-template-columns: repeat(7, 30px);
  grid-auto-rows: 28px;
  margin: 11px 0 8px;
}

.tools button, .operations button {
  display: flex;
  align-items: center;
  justify-content: center;
}

.tools svg {
  width: 20px;
  height: 20px;
  overflow: visible;
}

.blue {
  fill: none;
  stroke: #2d4fa2;
  stroke-width: 2.2px;
}

.dot {
  fill: #dce6f4;
  stroke: #3d4780;
}

.thin {
  fill: none;
  stroke: #46566a;
}

.tick {
  stroke: #111;
  stroke-width: 2px;
}

.tools .plate {
  background: #fdf3f9;
  outline: 1px solid #ecc9dc;
}

.letter {
  font: bold 21px "Liberation Serif", serif;
  text-anchor: middle;
  fill: #343a9c;
}

.tiny {
  font: bold 8px "Liberation Sans", sans-serif;
  text-anchor: middle;
  fill: #222;
}

.grey {
  fill: #777;
}

.green {
  fill: #2b8a3e;
}

.navy {
  fill: #1d2f80;
}

.red {
  fill: #b02535;
}

.drawing .layers-title {
  display: flex;
  align-items: center;
  gap: 5px;
  height: 16px;
  padding-left: 6px;
}

select {
  appearance: none;
  width: 100%;
  height: 20px;
  border: 1px solid #adadad;
  border-radius: 0;
  padding: 0 12px;
  background: #e9e9e9;
  font: inherit;
  color: inherit;
}

.layer-select, .select-wrap {
  position: relative;
}

.layer-select {
  width: 200px;
  margin: 4px 0 4px 6px;
}

.layer-select select {
  padding-left: 22px;
}

.layer-select > svg {
  position: absolute;
  left: 6px;
  top: 3px;
}

.layer-select .chevron, .select-wrap .chevron {
  position: absolute;
  left: auto;
  right: 4px;
  top: 6px;
}

.layer-row {
  display: flex;
  align-items: center;
  gap: 6px;
  padding-left: 10px;
}

.layer-row button svg {
  width: 20px;
  height: 20px;
}

.layer-row .divider {
  height: 18px;
  margin: 0 4px 0 2px;
  border-left: 1px solid #a3b0bd;
}

.layer-row button + button {
  margin-left: 8px;
}

input[type="checkbox"] {
  appearance: none;
  width: 14px;
  height: 13px;
  flex: none;
  margin: 0;
  border: 1px solid #555;
  background: #fff;
}

input[type="checkbox"]:checked::after {
  content: "";
  display: block;
  width: 4px;
  height: 7px;
  margin: 0 0 0 4px;
  border: solid #111;
  border-width: 0 2px 2px 0;
  transform: rotate(40deg);
}

.swatch, .fill {
  display: flex;
  align-items: center;
  gap: 4px;
  border: 1px solid #adadad;
  background: #ececec;
}

.swatch {
  width: 40px;
  height: 16px;
  padding: 0 3px;
}

.swatch span {
  width: 19px;
  height: 8px;
  background: #000;
}

.layer-row .swatch svg {
  width: 10px;
  height: 6px;
}

/* document */
.document {
  flex: 1;
  min-width: 0;
  display: flex;
  flex-direction: column;
  padding: 0 8px 0 4px;
  background: #f3f3f3;
}

.tabs {
  display: flex;
  align-items: flex-end;
  height: 24px;
  flex: none;
  padding: 0 4px 0 6px;
  background: #f7f7f7;
}

.tab {
  height: 19px;
  font-size: 12px;
  font-weight: 600;
}

.tab.active {
  width: 106px;
  padding-left: 16px;
  background: linear-gradient(#cfdcf6, #8fabea);
  clip-path: polygon(0 100%, 18px 4px, 24px 0, 100% 0, 100% 100%);
  font-weight: bold;
}

.tab.view3d {
  width: 68px;
  margin-left: 1px;
  border: 1px solid #b9ae80;
  border-bottom: none;
  border-radius: 4px 2px 0 0;
  background: linear-gradient(#fff3bd, #fcd868);
  color: #4a3c10;
}

.tab-nav {
  display: flex;
  gap: 6px;
  margin-left: auto;
  padding-bottom: 8px;
}

.viewport {
  flex: 1;
  min-height: 0;
  display: grid;
  grid-template-columns: 28px 1fr 18px;
  grid-template-rows: 25px 1fr 17px;
  border: 4px solid #91a6d8;
  background: #f0f0f0;
}

.corner {
  border-top: 1px solid #777;
  border-left: 1px solid #777;
  background: #f4f4f4;
}

.ruler-x, .ruler-y {
  width: 100%;
  height: 100%;
  min-width: 0;
  min-height: 0;
  font-family: "Liberation Serif", serif;
  font-size: 13px;
  text-anchor: middle;
  background: #f2f2f2;
  stroke: none;
  fill: #222;
}

.ruler-x {
  grid-column: 2 / 4;
  border-top: 1px solid #777;
  border-left: 1px solid #333;
}

.ruler-y {
  grid-row: 2 / 4;
  border-left: 1px solid #777;
  border-top: 1px solid #777;
  font-size: 12px;
}

.ruler-x path, .ruler-y path {
  stroke: #222;
}

.canvas {
  min-width: 0;
  min-height: 0;
  overflow: hidden;
  border-top: 1px solid #222;
  border-left: 1px solid #333;
  background: #dcdcdc;
}

.canvas svg {
  width: 100%;
  height: 100%;
}

.ink {
  fill: none;
  stroke: #2a2226;
  stroke-width: 1;
}

.heavy {
  stroke-width: 1.6px;
}

#cuts {
  fill: none;
}

.track-line {
  stroke: #f3a6dc;
  stroke-width: 1.6px;
}

.cut {
  stroke: #b03a98;
  stroke-width: 1.2px;
  stroke-dasharray: 4 2;
}

.node {
  fill: #19a32c;
  stroke: #0a3a10;
}

.scroll-y, .side-scroll {
  display: flex;
  flex-direction: column;
  align-items: center;
  padding: 5px 0;
  background: #f0f0f0;
}

.scroll-y {
  border-top: 1px solid #222;
}

.scroll-y .track, .side-scroll .track {
  flex: 1;
  width: 15px;
}

.scroll-y .thumb {
  height: 39%;
  margin-top: 132px;
  background: #cdcdcd;
}

.scroll-x {
  grid-column: 2;
  display: flex;
  align-items: center;
  padding: 0 4px;
  border-left: 1px solid #333;
}

.scroll-x .track {
  flex: 1;
  height: 15px;
  margin: 0 4px;
}

.scroll-x .thumb {
  width: 26%;
  height: 15px;
  margin-left: 239px;
  background: #cdcdcd;
}

.down {
  transform: rotate(180deg);
}

.left {
  transform: rotate(-90deg);
}

.right {
  transform: rotate(90deg);
}

/* right panel */
.toolpaths {
  width: 276px;
  flex: none;
  display: flex;
  flex-direction: column;
}

.toolpaths .panel-title {
  padding-left: 4px;
}

.toolpaths-body {
  flex: 1;
  min-height: 0;
  display: flex;
  background: #cbd9e6;
}

.cards {
  flex: 1;
  display: flex;
  flex-direction: column;
  gap: 10px;
  padding: 10px 6px 0 0;
}

.card {
  background: #f4f5fa;
}

.card h3 {
  display: flex;
  align-items: center;
  height: 25px;
  padding-left: 14px;
  background: linear-gradient(to right, #fff, #dfe8f1);
  font-size: 12px;
  color: #2c6fb5;
}

.list-row {
  display: flex;
  gap: 7px;
  padding: 7px 0 0 12px;
}

.list {
  width: 192px;
  height: 111px;
  border: 1px solid #777;
  background: #fff;
}

.list label, .preview-row label {
  display: flex;
  font-family: "Liberation Sans", Arial, sans-serif;
  font-size: 13px;
}

.list label {
  height: 19px;
  gap: 6px;
  padding: 2px 0 0 5px;
}

.list span {
  padding: 2px 2px 0 0;
}

.list .current span {
  background: #f3f3f3;
}

.list-buttons {
  display: flex;
  flex-direction: column;
  align-items: center;
  gap: 6px;
  padding-top: 22px;
}

.list-buttons button {
  display: flex;
  align-items: center;
  justify-content: center;
  width: 23px;
  height: 26px;
  border: 1px solid #b0b0b0;
  background: #ebebeb;
}

.list-buttons button:disabled {
  border-color: #ddd;
}

.list-buttons .note {
  height: 22px;
  margin-top: 3px;
}

.preview-row {
  display: flex;
  gap: 32px;
  padding: 6px 0 10px 14px;
}

.preview-row label {
  align-items: center;
  gap: 4px;
}

.operations {
  display: grid;
  grid-template-columns: repeat(6, 35px);
  grid-auto-rows: 31px;
  padding: 8px 0 8px 11px;
}

.operations svg {
  width: 22px;
  height: 20px;
  overflow: visible;
}

.preview {
  flex: 1;
  min-height: 0;
  background: #fff;
  font-size: 11px;
}

.preview h3 {
  gap: 14px;
  height: 35px;
  font-size: 12px;
  color: #111;
}

.material {
  display: flex;
  gap: 9px;
  padding: 8px 0 0 12px;
}

.boards {
  display: flex;
  flex-direction: column;
  gap: 2px;
}

.options {
  width: 168px;
}

.options label {
  display: flex;
  align-items: center;
  gap: 3px;
  height: 16px;
  padding-left: 3px;
}

.fill-row {
  display: flex;
  align-items: center;
  justify-content: space-between;
  padding: 9px 2px 3px 0;
}

.fill {
  width: 82px;
  height: 20px;
  padding: 0 3px;
  border-color: #d0d0d0;
}

.fill span {
  width: 60px;
  height: 13px;
  border: 1px solid #aaa;
}

.preview hr {
  margin: 4px 20px 0 22px;
  border: none;
  border-top: 2px solid #777;
}

.actions {
  display: grid;
  grid-template-columns: 36px 143px;
  gap: 4px 18px;
  padding: 8px 0 4px 30px;
}

.actions svg {
  width: 36px;
  height: 21px;
}

.actions button {
  height: 21px;
  border: 1px solid #b0b0b0;
  background: #e8e8e8;
}

.side-scroll {
  width: 17px;
  flex: none;
}

.side-scroll .thumb {
  height: 93%;
  margin-top: 5px;
  background: #cdcdcd;
}

.status {
  display: flex;
  height: 20px;
  flex: none;
  padding: 2px;
  background: #f1efef;
}

.coords {
  margin-left: auto;
  padding-right: 204px;
}

.taskbar {
  display: flex;
  align-items: center;
  height: 39px;
  flex: none;
  background: linear-gradient(to right, #5b6075, #5a5468 26%, #68506a 40%, #8a6882 53%, #80607a 75%, #7d5a74);
}

.taskbar button {
  display: flex;
  align-items: center;
  justify-content: center;
  width: 67px;
  height: 39px;
}

.taskbar button:first-child {
  width: 54px;
}

.taskbar .running {
  width: 63px;
  border: 1px solid #e0dfe6;
  border-right: 6px double #e0dfe6;
  background: #9a97aa;
  font-size: 20px;
  font-weight: bold;
  color: #2b2865;
}

.tray {
  display: flex;
  align-items: center;
  gap: 12px;
  margin-left: auto;
  padding-right: 21px;
  color: #fff;
}

.clock {
  margin-left: 10px;
  text-align: center;
}
```
